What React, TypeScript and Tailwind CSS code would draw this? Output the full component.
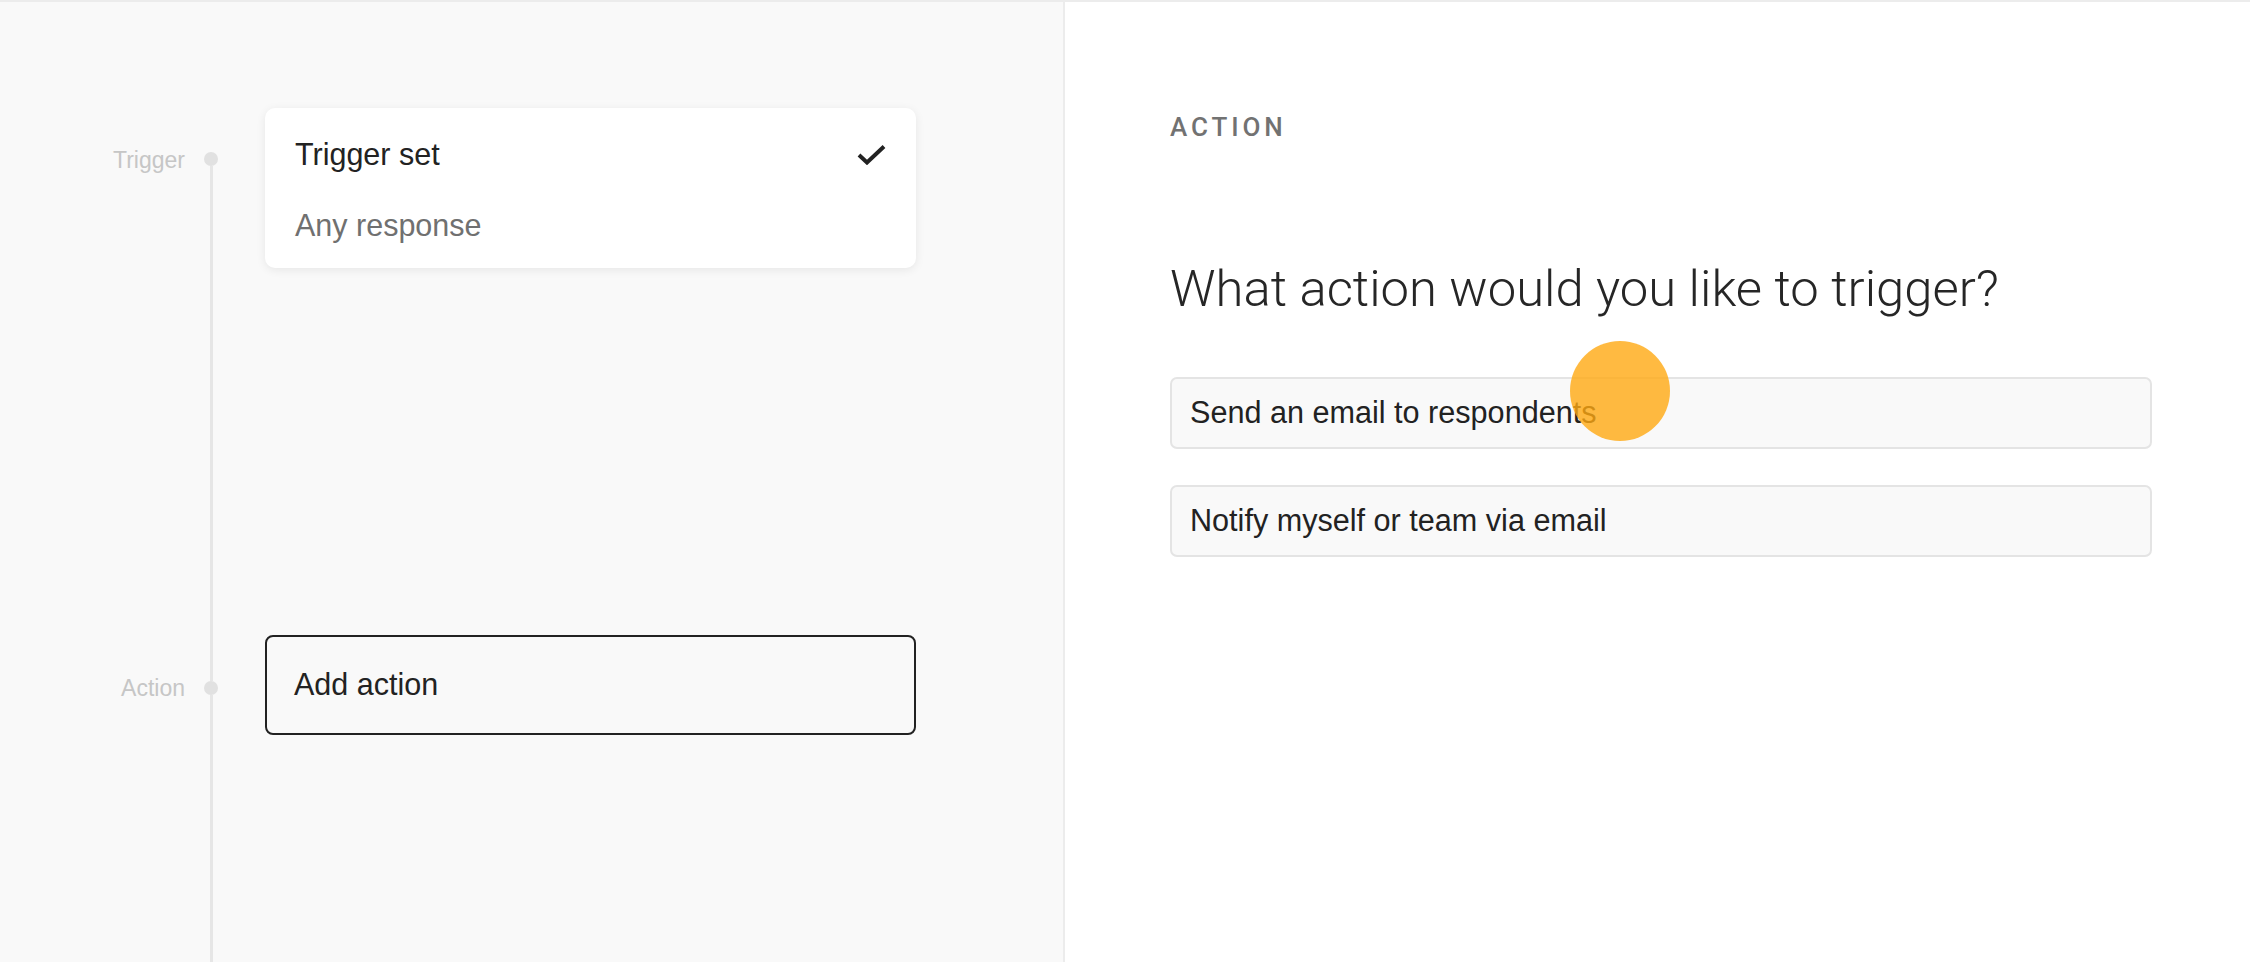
const sans = "font-['Liberation_Sans',Arial,sans-serif]";
const roboto = "font-['Roboto','Liberation_Sans',sans-serif]";

function Check() {
  return (
    <svg width="29" height="21" viewBox="0 0 29 21" fill="none">
      <path d="M2 11 L10 18.5 L27 2.5" stroke="#222" strokeWidth="4" />
    </svg>
  );
}

const LeftPanel = () => {
  return (
    <div className="flex w-[1065px] flex-col border-r-2 border-[#ececec] bg-[#f9f9f9] pt-[106px]">
      {/* trigger step */}
      <div className="flex">
        <div className="w-[185px] pt-[38px] text-right text-[23px] leading-[28px] text-[#c6c6c6]">Trigger</div>
        <div className="flex w-[52px] flex-col items-center">
          <div className="h-[44px]" />
          <div className="h-[14px] w-[14px] rounded-full bg-[#e1e1e1]" />
          <div className="w-[3px] flex-1 bg-[#e6e6e6]" />
        </div>
        <div className="ml-[28px] w-[651px] pb-[367px]">
          <div className="h-[160px] rounded-[10px] bg-white px-[30px] pt-[28px] pb-[22px] shadow-[0_2px_10px_rgba(0,0,0,0.08)]">
            <div className="flex items-center justify-between">
              <span className="text-[30.5px] leading-[36px]">Trigger set</span>
              <Check />
            </div>
            <div className="mt-[35px] text-[30.5px] leading-[36px] text-[#707070]">Any response</div>
          </div>
        </div>
      </div>

      {/* action step */}
      <div className="flex flex-1">
        <div className="w-[185px] pt-[39px] text-right text-[23px] leading-[28px] text-[#c6c6c6]">Action</div>
        <div className="flex w-[52px] flex-col items-center">
          <div className="h-[46px] w-[3px] bg-[#e6e6e6]" />
          <div className="h-[14px] w-[14px] rounded-full bg-[#e1e1e1]" />
          <div className="w-[3px] flex-1 bg-[#e6e6e6]" />
        </div>
        <div className="ml-[28px] w-[651px]">
          <button className="flex h-[100px] w-[651px] items-center rounded-[8px] border-2 border-[#222] pl-[27px] text-left text-[30.5px]">
            Add action
          </button>
        </div>
      </div>
    </div>
  );
};

const options = ["Send an email to respondents", "Notify myself or team via email"];

const RightPanel = () => {
  return (
    <div className="relative flex-1 bg-white pl-[105px] pt-[109px]">
      <div className={`${roboto} text-[26px] font-medium leading-[32px] tracking-[0.15em] text-[#727272]`}>ACTION</div>
      <h1 className={`${roboto} mt-[116px] text-[50.8px] font-light leading-[60px] text-[#262626]`}>
        What action would you like to trigger?
      </h1>
      <div className="mt-[58px] flex flex-col gap-[36px]">
        {options.map((o) => (
          <div
            key={o}
            className="flex h-[72px] w-[982px] items-center rounded-[7px] border-2 border-[#e4e4e4] bg-[#f9f9f9] pl-[18px] text-[30.6px]"
          >
            {o}
          </div>
        ))}
      </div>
      {/* cursor highlight */}
      <div className="absolute left-[505px] top-[339px] h-[100px] w-[100px] rounded-full bg-[#ffa912]/80" />
    </div>
  );
};

export default function App() {
  return (
    <div className={`flex h-[962px] w-[2250px] flex-col border-t-2 border-[#ececec] text-[#222] ${sans}`}>
      <div className="flex flex-1">
        <LeftPanel />
        <RightPanel />
      </div>
    </div>
  );
}
